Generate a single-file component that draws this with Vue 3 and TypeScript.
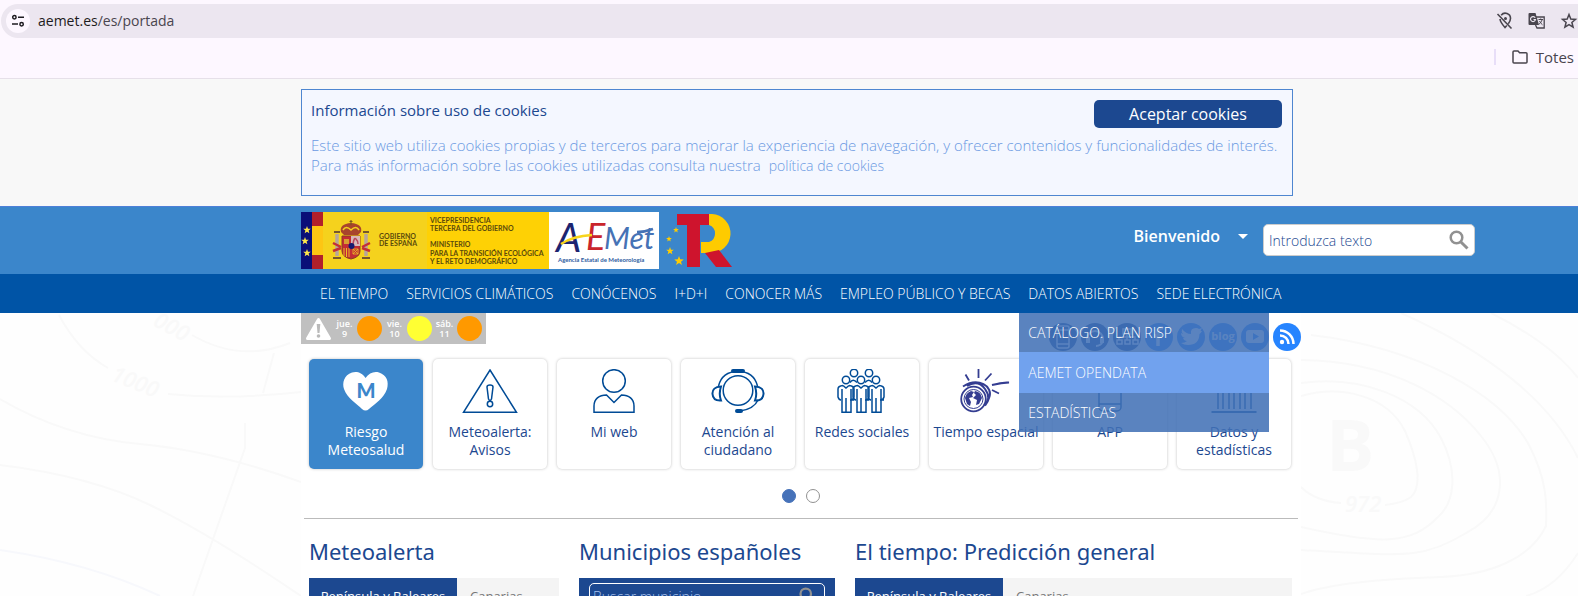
<script setup lang="ts">
import { ref } from 'vue'

interface Alert { day: string; num: number; level: string }
interface Card { label: string; icon: string; active?: boolean }

const search = ref('')
const town = ref('')
const menu: string[] = ['EL TIEMPO', 'SERVICIOS CLIMÁTICOS', 'CONÓCENOS', 'I+D+I', 'CONOCER MÁS', 'EMPLEO PÚBLICO Y BECAS', 'DATOS ABIERTOS', 'SEDE ELECTRÓNICA']
const submenu: string[] = ['CATÁLOGO. PLAN RISP', 'AEMET OPENDATA', 'ESTADÍSTICAS']
const alerts: Alert[] = [
  { day: 'jue.', num: 9, level: 'orange' },
  { day: 'vie.', num: 10, level: 'yellow' },
  { day: 'sáb.', num: 11, level: 'orange' },
]
const cards: Card[] = [
  { label: 'Riesgo Meteosalud', icon: 'heart', active: true },
  { label: 'Meteoalerta: Avisos', icon: 'warning' },
  { label: 'Mi web', icon: 'user' },
  { label: 'Atención al ciudadano', icon: 'headset' },
  { label: 'Redes sociales', icon: 'people' },
  { label: 'Tiempo espacial', icon: 'space' },
  { label: 'APP', icon: 'phone' },
  { label: 'Datos y estadísticas', icon: 'columns' },
]
const social: string[] = ['app', 'contacto', 'mapa', 'facebook', 'twitter', 'blog', 'youtube', 'rss']
const stars = [[6, 18], [4, 29], [6, 41]]
const euStars = [[12, 18, 3], [5, 27, 3], [6, 39, 4], [15, 49, 5]]
const heads = [[20, 4], [35, 4], [12, 11], [27, 11], [42, 11]]

function star(cx: number, cy: number, r: number): string {
  const pts: string[] = []
  for (let i = 0; i < 10; i++) {
    const a = -Math.PI / 2 + (i * Math.PI) / 5
    const q = i % 2 ? r * 0.42 : r
    pts.push(`${(cx + q * Math.cos(a)).toFixed(2)},${(cy + q * Math.sin(a)).toFixed(2)}`)
  }
  return pts.join(' ')
}
</script>

<template>
  <div class="page">
    <div class="browser">
      <div class="urlbar">
        <button class="site-info" aria-label="Información del sitio">
          <svg width="14" height="14" viewBox="0 0 14 14" fill="none" stroke="#1d1b20" stroke-width="1.5"><circle cx="3.4" cy="3.3" r="1.7" /><path d="M7 3.3h6M1 10h6" /><circle cx="10.6" cy="10.2" r="1.7" /></svg>
        </button>
        <span class="url">aemet.es<span class="path">/es/portada</span></span>
        <button class="tool" aria-label="Ubicación bloqueada">
          <svg width="18" height="18" viewBox="0 0 18 18" fill="none" stroke="#49454e" stroke-width="1.6"><path d="M5.2 3.2A5.2 5.2 0 0 1 14.500 6.600C14.500 8.500 13.500 10.200 12.300 11.800M10.800 13.500L9 15.500C6.500 12.700 4.300 9.800 4 7M1.500 2L15.500 16.500" /><circle cx="9.500" cy="6.500" r="1.500" fill="#49454e" stroke="none" /></svg>
        </button>
        <button class="tool" aria-label="Traducir">
          <svg width="18" height="18" viewBox="0 0 18 18"><path d="M8 5h8.200v11H9l-1.500-3" fill="none" stroke="#49454e" stroke-width="1.300" /><path d="M1.500 1h6l3.500 12H1.500Q.5 13 .5 12V2Q.5 1 1.500 1z" fill="#49454e" /><path d="M7.200 5.800A2.500 2.500 0 1 0 7.500 7.500H5.500" fill="none" stroke="#ece6f0" stroke-width="1.200" /><path d="M10.500 7.500h4.500M12.700 6.500v1M14 8c-.5 2-2 3.500-3 4.200M11.500 9c.8 1.700 1.800 2.800 3 3.800" fill="none" stroke="#49454e" /></svg>
        </button>
        <button class="tool" aria-label="Añadir a marcadores">
          <svg width="18" height="18" viewBox="0 0 18 18"><path d="M9 2.500l1.800 4.500 4.700.400-3.600 3.100 1.200 4.700L9 12.700l-4.100 2.500 1.200-4.700-3.600-3.100 4.700-.400z" fill="none" stroke="#49454e" stroke-width="1.500" /></svg>
        </button>
      </div>
      <div class="bookmarks">
        <a href="#" class="bookmark">
          <svg width="16" height="14" viewBox="0 0 16 14"><path d="M1 2q0-1 1-1h4l1.600 1.700H14q1 0 1 1V12q0 1-1 1H2q-1 0-1-1z" fill="none" stroke="#49454e" stroke-width="1.500" /></svg>
          <span>Totes</span>
        </a>
      </div>
    </div>

    <div class="cookies">
      <section class="wrap cookie-box">
        <div class="cookie-head">
          <h2>Información sobre uso de cookies</h2>
          <button class="accept">Aceptar cookies</button>
        </div>
        <p>Este sitio web utiliza cookies propias y de terceros para mejorar la experiencia de navegación, y ofrecer contenidos y funcionalidades de interés.<br>Para más información sobre las cookies utilizadas consulta nuestra <a href="#">política de cookies</a></p>
      </section>
    </div>

    <header class="header">
      <div class="header-inner">
        <a href="#" aria-label="AEMET, Gobierno de España">
          <svg width="358" height="57" viewBox="0 0 358 57">
            <rect width="11" height="57" fill="#0a0f78" />
            <polygon v-for="s in stars" :key="s[1]" :points="star(s[0], s[1], 4)" fill="#ffe84a" />
            <rect x="11" width="11" height="57" fill="#b1202b" /><rect x="11" y="14" width="11" height="29" fill="#fdc613" />
            <rect x="22" width="104" height="57" fill="#f5d21d" /><rect x="126" width="122" height="57" fill="#fed105" />
            <rect x="248" width="110" height="57" fill="#fff" />
            <g>
              <path d="M40 20Q38 12 50 11Q62 12 60 20L57 23H43z" fill="#a8442c" /><path d="M42 18Q45 13 50 18Q55 13 58 18" fill="none" stroke="#f5d21d" stroke-width="1.500" />
              <path d="M50 8v5M48.500 9.500h3" stroke="#7a5a20" stroke-width="1.200" />
              <path d="M41 24h18v15q0 6-9 8-9-2-9-8z" fill="#c42b35" stroke="#8c3b22" stroke-width="1" />
              <path d="M50 24h9v10h-9z" fill="#d9b8b8" /><path d="M52 32q1-7 3-5t2 5" fill="none" stroke="#b7455c" stroke-width="1.500" />
              <path d="M43 36v8M45.500 36v9M48 36v9" stroke="#e9bd25" stroke-width="1" /><path d="M52 37h5v5h-5zM52 37l5 5M57 37l-5 5" fill="none" stroke="#e9bd25" stroke-width=".8" />
              <path d="M43 27h5v5h-5z" fill="#d99d32" /><circle cx="50.500" cy="34" r="3" fill="#171c70" />
              <path d="M36 22v22M65 22v22" stroke="#b7a69a" stroke-width="3.500" /><path d="M33 20h6M62 20h6M32 46h8M61 46h8" stroke="#76572c" stroke-width="2" />
              <path d="M32 31l8 4M61 35l8-4M32 39l8-3M61 36l8 3" stroke="#c32f37" stroke-width="2.500" />
            </g>
            <g class="gov"><text x="78" y="27">GOBIERNO</text><text x="78" y="34">DE ESPAÑA</text><text x="129" y="11">VICEPRESIDENCIA</text><text x="129" y="19">TERCERA DEL GOBIERNO</text><text x="129" y="35">MINISTERIO</text><text x="129" y="44">PARA LA TRANSICIÓN ECOLÓGICA</text><text x="129" y="52">Y EL RETO DEMOGRÁFICO</text></g>
            <g class="brand"><text x="255" y="40" class="b-a">A</text><text x="285" y="38" class="b-e">E</text><text x="303" y="37" class="b-m">Met</text></g>
            <path d="M260 32Q272 24 291 23" fill="none" stroke="#f7d51c" stroke-width="2.500" />
            <path d="M336 20Q344 20 352 17" fill="none" stroke="#4672b5" stroke-width="2.500" />
            <text x="257" y="50" class="b-sub">Agencia Estatal de Meteorología</text>
          </svg>
        </a>
        <a href="#" class="plan" aria-label="Plan de Recuperación, Transformación y Resiliencia">
          <svg width="68" height="57" viewBox="0 0 68 57">
            <polygon v-for="s in euStars" :key="s[1]" :points="star(s[0], s[1], s[2])" fill="#fc0" />
            <path d="M45 2v11a9 9 0 0 1 0 17H37V41h9A19 19 0 0 0 48 2z" fill="#fecb00" />
            <rect x="13" y="2" width="32" height="11" fill="#ce142d" /><rect x="23" y="2" width="13" height="53" fill="#ce142d" />
            <path d="M41 41L55 38L68 55H52z" fill="#ce142d" />
          </svg>
        </a>
        <button class="welcome">Bienvenido<span class="caret"></span></button>
        <form class="search" @submit.prevent>
          <input v-model="search" type="text" placeholder="Introduzca texto" aria-label="Buscar">
          <button aria-label="Enviar búsqueda"><svg width="20" height="20" viewBox="0 0 20 20" fill="none" stroke="#919191" stroke-width="2.500"><circle cx="7.500" cy="7.500" r="5.800" /><path d="M11.700 11.700L18.500 18.500" stroke-width="3" /></svg></button>
        </form>
      </div>
    </header>

    <nav class="nav">
      <ul class="wrap">
        <li v-for="m in menu" :key="m">
          <a href="#">{{ m }}</a>
          <ul v-if="m === 'DATOS ABIERTOS'" class="dropdown">
            <li v-for="(s, i) in submenu" :key="s" :class="{ hot: i === 1 }"><a href="#">{{ s }}</a></li>
          </ul>
        </li>
      </ul>
    </nav>

    <div class="body">
      <svg class="isobars left" width="301" height="283" viewBox="0 0 301 283" fill="none" stroke="#f9f9f9" stroke-width="2">
        <path d="M59 2Q78 38 108 55M168 81Q230 87 301 79M192 22Q240 50 290 30M274 40L263 80M0 86Q65 124 140 131T301 169M0 152Q90 163 150 192T301 283M245 110V135L193 283" />
        <path d="M0 237Q90 250 160 283" stroke="#f7f8fc" />
        <g class="iso-text"><text x="152" y="12" transform="rotate(28 152 12)">000</text><text x="110" y="67" transform="rotate(22 110 67)">1000</text></g>
      </svg>
      <svg class="isobars right" width="277" height="283" viewBox="0 0 277 283" fill="none" stroke="#f9f9f9" stroke-width="2">
        <path d="M0 83C40 72 86 82 104 118C116 145 122 173 110 184Q102 190 84 192M0 174Q14 188 40 190M0 70C60 62 118 84 140 125C158 160 153 190 137 204C110 232 80 232 0 214M0 47C90 48 150 85 180 123C210 160 204 200 165 220C120 248 100 242 0 237M10 22C120 35 200 82 228 132C246 167 246 190 245 213C230 245 190 262 140 264Q40 267 0 281M100 0C190 40 250 90 277 145M190 0Q250 30 277 65M277 240Q255 275 225 283" />
        <g class="iso-text"><text x="25" y="158" class="iso-b">B</text><text x="44" y="199">972</text></g>
      </svg>

      <main class="wrap main">
        <div class="strip">
          <a href="#" class="alerts">
            <svg width="27" height="24" viewBox="0 0 27 24"><path d="M13.500 2.500L24.500 21.500H2.500z" fill="#fff" stroke="#fff" stroke-width="3" stroke-linejoin="round" /><path d="M11.700 7h3.600l-.8 9h-2z" fill="#b9b9b9" /><circle cx="13.500" cy="19" r="1.800" fill="#b9b9b9" /></svg>
            <template v-for="a in alerts" :key="a.num">
              <span class="day">{{ a.day }}<br>{{ a.num }}</span><span class="level" :class="a.level"></span>
            </template>
          </a>
          <div class="social">
            <a v-for="(s, i) in social" :key="s" href="#" :aria-label="s" :class="{ dark: i < 3 }">
              <svg width="28" height="28" viewBox="0 0 28 28" fill="none" stroke="#fff" stroke-width="2">
                <g v-if="s === 'app'"><rect x="8" y="3" width="12" height="22" rx="2" stroke-width="1.500" /><path d="M8 7h12M8 21h12" stroke-width="1.500" /></g>
                <g v-else-if="s === 'contacto'"><path d="M6 16a8 8 0 0 1 16 0M22 18q-2 5-7 5" /><path d="M7 14v6M21 14v6" stroke-width="4" /></g>
                <g v-else-if="s === 'mapa'"><path d="M10 6h8v5h-8zM4 17h5v4H4zM12 17h5v4h-5zM20 17h5v4h-5zM14 11v6M6 17v-3h16v3" stroke-width="1.500" /></g>
                <path v-else-if="s === 'facebook'" d="M18 5h-2q-3 0-3 4v14M9 13h8" stroke-width="3.500" />
                <path v-else-if="s === 'twitter'" d="M5 6q4 5 9 5-1-6 5-6 2 0 3 1l3-1-1.500 3L25 8q-1 2-2.500 3Q22 22 11 22q-4 0-7-2 4 0 6-2-3 0-4-3h2q-4-1-4-5l2 1Q4 9 5 6z" fill="#fff" stroke="none" />
                <text v-else-if="s === 'blog'" x="14" y="17" class="blog">blog</text>
                <g v-else-if="s === 'youtube'"><rect x="5" y="7" width="18" height="13" rx="3" fill="#fff" stroke="none" /><path d="M12 10l6 3.500-6 3.500z" fill="#2684ff" stroke="none" /></g>
                <g v-else stroke-width="2.500"><circle cx="9" cy="19" r="2.200" fill="#fff" stroke="none" /><path d="M7 12.500a8.500 8.500 0 0 1 8.500 8.500M7 7.500A13.500 13.500 0 0 1 20.500 21" /></g>
              </svg>
            </a>
          </div>
        </div>

        <div class="cards">
          <a v-for="c in cards" :key="c.label" href="#" class="card" :class="{ active: c.active }">
            <svg width="56" height="44" viewBox="0 0 56 44" fill="none" stroke="#004b96" stroke-width="1.500">
              <g v-if="c.icon === 'heart'" stroke="none"><path d="M27.500 9C24 3 18 2 14 3.500C6 6 4 14 6 20C9 29 19 35 24 40Q27.500 43 31 40C37 35 46 29 49 20C51 13 49 6 41 3.500C36 2 31 4 27.500 9z" fill="#fff" /><text x="28" y="29" class="m">M</text></g>
              <g v-else-if="c.icon === 'warning'" stroke-width="1.500"><path d="M28 1L54.500 43.300H1.500z" /><path d="M25 18q0-2 3-2t3 2l-1.500 12q-1.500 3-3 0z" /><circle cx="28" cy="35" r="2.700" /></g>
              <g v-else-if="c.icon === 'user'"><circle cx="28" cy="12" r="11.300" /><path d="M8 43.300V37C8 30 13 26 20.500 26L28 33.500 35.500 26C43 26 48 30 48 37V43.300z" /></g>
              <g v-else-if="c.icon === 'headset'"><circle cx="28" cy="21.500" r="14.800" /><path d="M8.500 17C11 7 18 2.500 28 2.500S45 7 47.500 17M48 31Q44 40 30 42" /><path d="M23 2h10" stroke-width="4" stroke-linecap="round" /><path d="M27 42h4" stroke-width="4" stroke-linecap="round" /><path d="M11 17.500Q2 18 2.500 25T11 31.500Q8.500 25 11 17.500zM45 17.500Q54 18 53.500 25T45 31.500Q47.500 25 45 17.500z" stroke-width="2" /></g>
              <g v-else-if="c.icon === 'people'"><circle v-for="(h, i) in heads" :key="i" :cx="h[0]" :cy="h[1]" r="3.700" /><path v-for="x in [12, 27, 42]" :key="x" :d="`M${x - 4} 20V43.300H${x + 5}V20M${x} 29V43M${x - 4} 29V21M${x - 3} 16.500L${x} 19l3-2.500M${x + 4} 31H${x + 8}M${x - 3} 16.500Q${x - 8} 17 ${x - 8} 20V28q1 3 3 3M${x + 3} 16.500Q${x + 8} 17 ${x + 8} 20V28q-1 3-3 3`" /><path d="M16 13.500Q19 9 23 13.500M31 13.500Q35 9 38 13.500" /></g>
              <g v-else-if="c.icon === 'space'" stroke="#343d91"><circle cx="15.500" cy="30" r="12.300" stroke-width="1.800" /><circle cx="15.500" cy="30" r="9.500" stroke-width="1" /><path d="M7 29q1-5 6-7l3 1-2 3 1 2-4 1 2 4-1 4-3-2zM17 22q6 1 7 7l-3 6-3 1 1-5-4-2 3-3-2-2z" fill="#343d91" stroke="none" /><path d="M5 17.500C20 8 36 17 31 29Q30 33 27 36.500M9 17Q20 10 27 20T26 36" stroke-width="2" /><path d="M7.500 5.500l3.500 6M20.500 0v9M33.500 4.500L27 11.500M34 16Q44 13 51 13.500Q44 14 34 16M34 21l7 3.500" stroke-width="1.800" /></g>
              <g v-else-if="c.icon === 'phone'"><rect x="17" y="1" width="22" height="41" rx="4" /><path d="M17 7h22M17 35h22" /></g>
              <g v-else><path d="M7 11L28 1l22 10zM9 14h38M5.500 43h45" stroke-width="2" /><path d="M12 16v24M17 16v24M23 16v24M28 16v24M34 16v24M39 16v24M45 16v24" stroke-width="1.500" /></g>
            </svg>
            <span>{{ c.label }}</span>
          </a>
        </div>

        <div class="dots"><button class="on" aria-label="Página 1"></button><button aria-label="Página 2"></button></div>

        <div class="columns">
          <section>
            <h2>Meteoalerta</h2>
            <div class="tabs"><button class="sel">Península y Baleares</button><button>Canarias</button></div>
          </section>
          <section>
            <h2>Municipios españoles</h2>
            <form class="town" @submit.prevent>
              <div class="field">
                <input v-model="town" type="text" placeholder="Buscar municipio" aria-label="Buscar municipio">
                <button aria-label="Buscar"><svg width="18" height="18" viewBox="0 0 20 20" fill="none" stroke="#919191" stroke-width="2.500"><circle cx="7.500" cy="7.500" r="5.800" /><path d="M11.700 11.700L18.500 18.500" stroke-width="3" /></svg></button>
              </div>
            </form>
          </section>
          <section>
            <h2>El tiempo: Predicción general</h2>
            <div class="tabs"><button class="sel">Península y Baleares</button><button>Canarias</button></div>
          </section>
        </div>
      </main>
    </div>
  </div>
</template>

<style>
body { margin: 0; }
</style>

<style scoped>
* { box-sizing: border-box; }
.page { height: 100vh; overflow: hidden; display: flex; flex-direction: column; font-family: "Open Sans", "Noto Sans", sans-serif; font-size: 14px; color: #1c4890; background: #fefefe; }
.page > * { flex-shrink: 0; }
a { color: inherit; text-decoration: none; }
button { border: 0; padding: 0; background: none; font: inherit; color: inherit; cursor: pointer; white-space: nowrap; }
ul { list-style: none; margin: 0; padding: 0; }
h2 { margin: 0; font-weight: 400; }
svg { display: block; }
.wrap { width: min(1000px, 100%); margin-left: max(0px, calc(50% - 488px)); }

.browser { height: 79px; padding-top: 4px; background: #fdf7ff; border-bottom: 1px solid #e6e0e9; }
.urlbar { height: 34px; margin-left: 1px; padding-left: 5px; display: flex; align-items: center; background: #ece6f0; border-radius: 17px 0 0 17px; color: #1d1b20; }
.site-info { width: 24px; height: 24px; margin-right: 8px; border-radius: 50%; background: #fdf7ff; display: grid; place-items: center; }
.url { margin-right: auto; line-height: 18px; }
.path { color: #49454e; }
.tool { margin-left: 14px; }
.bookmarks { height: 38px; display: flex; justify-content: flex-end; align-items: center; padding-right: 4px; }
.bookmark { display: flex; align-items: center; gap: 8px; height: 16px; padding-left: 16px; border-left: 2px solid #e8def8; color: #49454e; font-size: 15px; }

.cookies { background: #f8f8f8; padding: 10px 0; }
.cookie-box { width: min(992px, 100%); height: 107px; padding: 10px 10px 10px 9px; border: 1px solid #4e86d0; background: #f4f7ff; }
.cookie-head { display: flex; justify-content: space-between; height: 35px; }
.cookie-head h2 { font-size: 15px; line-height: 20px; }
.accept { width: 188px; height: 28px; border-radius: 5px; background: #1c4890; color: #fff; font-size: 16px; }
.cookie-box p { margin: 0; font-size: 15px; font-weight: 300; line-height: 20px; color: #6a99e2; }
.cookie-box p a { font-size: 14px; margin-left: 4px; }

.header { height: 68px; border-top: 1px solid #4e80d8; background: #3b86cb; }
.header-inner { display: flex; align-items: flex-start; padding: 5px 103px 0 0; margin-left: max(0px, calc(50% - 488px)); }
.plan { margin-left: 5px; }
.gov { font: 700 7px Lato, sans-serif; fill: #5b4a0c; }
.brand { font-family: Lato, sans-serif; font-style: italic; }
.b-a { font-size: 40px; fill: #1c2470; }
.b-e { font-size: 36px; fill: #c9252c; }
.b-m { font-size: 30px; fill: #4672b5; }
.b-sub { font: 700 6px Lato, sans-serif; fill: #2c5aa0; }
.welcome { margin: 12px 15px 0 auto; display: flex; align-items: center; gap: 18px; height: 24px; font-size: 16px; font-weight: 600; color: #fff; }
.caret { border: 5px solid transparent; border-top-color: #fff; border-bottom: 0; }
.search { margin-top: 12px; width: 212px; height: 32px; padding: 0 5px; display: flex; align-items: center; background: #fff; border: 1px solid #ccc; border-radius: 5px; }
input { flex: 1; min-width: 0; border: 0; padding: 0; outline: 0; background: none; font: 300 14px "Open Sans", sans-serif; color: #1c4890; }
input::placeholder { color: #1c4890; opacity: 1; }

.nav { height: 39px; background: #0054a6; color: #fff; font-weight: 300; line-height: 39px; position: relative; z-index: 2; }
.nav > ul { display: flex; padding-left: 10px; }
.nav li { position: relative; white-space: nowrap; }
.nav a { display: block; padding: 0 9px; }
.dropdown { position: absolute; top: 100%; left: 0; width: 250px; background: rgba(66, 112, 181, .87); }
.dropdown .hot { background: #71a2ee; line-height: 41px; }

.body { position: relative; flex: 1 0 auto; }
.isobars { position: absolute; top: 0; }
.left { left: 0; }
.right { right: 0; }
.iso-text { fill: #f9f9f9; stroke: none; font: italic 600 22px "Open Sans", sans-serif; }
.iso-b { font-size: 72px; font-style: normal; font-weight: 700; }
.main { position: relative; background: #fff; }
.strip { display: flex; justify-content: space-between; height: 46px; }
.alerts { display: flex; align-items: center; width: 185px; height: 31px; padding-left: 4px; background: #c0c0c0; color: #fff; font-size: 9px; font-weight: 600; line-height: 10px; text-align: center; }
.day { width: 25px; }
.level { width: 25px; height: 25px; border-radius: 50%; }
.orange { background: #ff9900; }
.yellow { background: #ffff33; }
.social { display: flex; gap: 4px; margin-top: 10px; }
.social a { width: 28px; height: 28px; border-radius: 50%; background: #2684ff; }
.social .dark { background: #1c4890; }
.blog { font: 700 11px "Open Sans", sans-serif; fill: #fff; stroke: none; text-anchor: middle; }
.m { font: 900 20px Lato, sans-serif; fill: #3b86cb; text-anchor: middle; }
.cards { display: grid; grid-template-columns: repeat(8, 1fr); gap: 10px; padding: 0 10px 0 8px; }
.card { min-width: 0; height: 110px; padding-top: 10px; display: flex; flex-direction: column; align-items: center; gap: 10px; border-radius: 5px; background: #fff; box-shadow: 0 0 3px rgba(0, 0, 0, .25); line-height: 18px; text-align: center; }
.card.active { background: #3b86cb; color: #fff; }
.dots { display: flex; justify-content: center; gap: 10px; padding: 20px 0 15px; margin: 0 3px; border-bottom: 1px solid #bbb; }
.dots button { width: 14px; height: 14px; border: 1px solid #919191; border-radius: 50%; }
.dots .on { background: #4672b9; border-color: #4672b9; }
.columns { display: grid; grid-template-columns: 250px 256px 1fr; gap: 20px; padding: 17px 9px 0 8px; }
.columns h2 { font-family: "Noto Sans", "Open Sans", sans-serif; font-size: 22px; line-height: 30px; margin-bottom: 12px; }
.tabs { display: flex; height: 36px; background: #f4f4f4; font-size: 13px; color: #777; }
.tabs button { padding: 0 13px; }
.tabs .sel { width: 148px; padding: 0; background: #1c4890; color: #fff; }
.town { height: 36px; padding: 5px 10px; background: #1c4890; }
.field { display: flex; align-items: center; height: 26px; padding: 0 7px 0 3px; border: 1px solid #fff; border-radius: 5px; }
.field input::placeholder { color: #a5c0ee; }
</style>
